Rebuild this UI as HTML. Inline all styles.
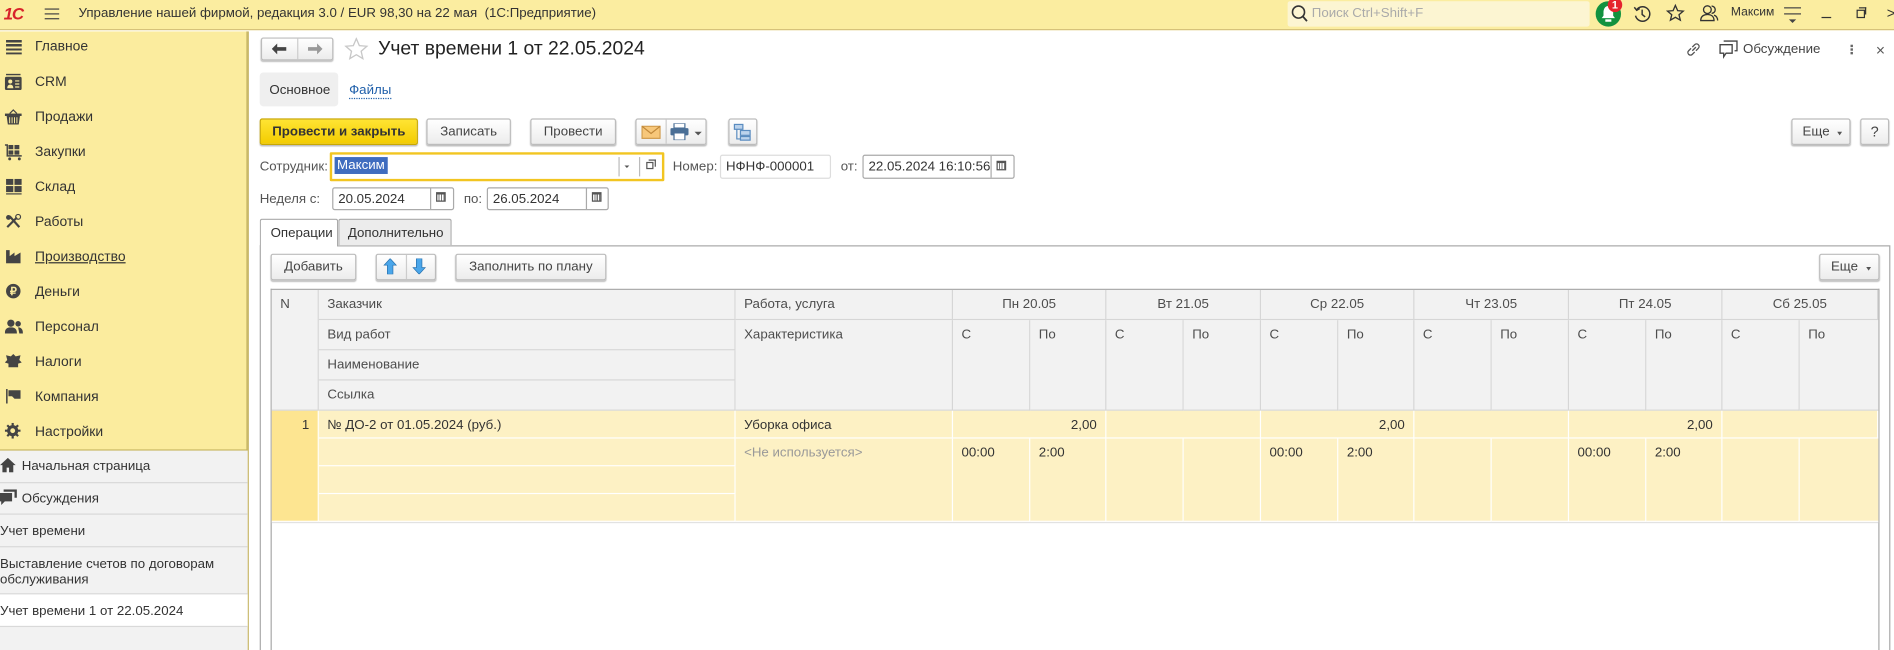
<!DOCTYPE html>
<html><head><meta charset="utf-8">
<style>
html,body{margin:0;padding:0;width:1894px;height:650px;overflow:hidden;background:#fff}
#w{position:absolute;left:0;top:0;width:1568px;height:538px;overflow:hidden;transform:scale(1.20791,1.2082);transform-origin:0 0;font-family:"Liberation Sans",sans-serif;font-size:11.5px;color:#333}
.a{position:absolute;box-sizing:border-box}
.btn{position:absolute;box-sizing:border-box;border:1px solid #bcbcbc;border-radius:2px;background:linear-gradient(#fff,#ececec);box-shadow:0 1px 1px rgba(0,0,0,.25);text-align:center;color:#444;font-size:11px;line-height:21px}
.side{position:absolute;left:29px;font-size:11.5px;color:#333;margin-top:1px}
.ic{position:absolute;left:5px;width:13px;height:12px}
.h{position:absolute;box-sizing:border-box;background:#f2f2f2;border-right:1px solid #d6d6d6;border-bottom:1px solid #d6d6d6;padding:6px 7px 0;color:#4d4d4d;font-size:11px;white-space:nowrap;overflow:hidden}
.d{position:absolute;box-sizing:border-box;background:#fdf1c4;border-right:1px solid #fff;border-bottom:1px solid #fff;padding:6px 7px 0;color:#333;font-size:11px;white-space:nowrap;overflow:hidden}
.inp{position:absolute;box-sizing:border-box;border:1px solid #c8c8c8;border-radius:2px;background:#fff;height:19px;padding:3px 4px 0;font-size:11px}
.g{position:absolute;left:0;width:205px;box-sizing:border-box;border-bottom:1px solid #d9d9d9;font-size:11px;color:#333;padding-left:0}
.lb{position:absolute;color:#555;font-size:11px}
</style></head><body><div id="w">

<!-- top bar -->
<div class="a" style="left:0;top:0;width:1568px;height:25px;background:#fbeda0;border-bottom:1px solid #d6c27a"></div>
<div class="a" style="left:3px;top:3px;font-weight:bold;font-size:14px;color:#d8232a;letter-spacing:-1px;font-style:italic">1С</div>
<div class="a" style="left:37px;top:7px;width:12px;height:1px;background:#444;box-shadow:0 4px 0 #444,0 8px 0 #444"></div>
<div class="a" style="left:65px;top:5px;font-size:11px;color:#333">Управление нашей фирмой, редакция 3.0 / EUR 98,30 на 22 мая&nbsp; (1С:Предприятие)</div>
<div class="a" style="left:1066px;top:1px;width:250px;height:21px;background:#fcf5d2;border-radius:2px"></div>
<svg class="a" style="left:1069px;top:4px" width="14" height="15"><circle cx="6" cy="6" r="5" fill="none" stroke="#333" stroke-width="1.3"/><path d="M9.5 9.5l3.5 4" stroke="#333" stroke-width="1.5"/></svg>
<div class="a" style="left:1086px;top:5px;color:#aaa;font-size:11px">Поиск Ctrl+Shift+F</div>
<div class="a" style="left:1321px;top:1px;width:21px;height:21px;border-radius:50%;background:#12923f"></div>
<svg class="a" style="left:1325px;top:4px" width="13" height="15"><path d="M6.5 1c-3 0-4 3-4 5v3l-1.5 2h11l-1.5-2v-3c0-2-1-5-4-5z" fill="#fff"/><rect x="4" y="12" width="5" height="2" fill="#fff"/></svg>
<div class="a" style="left:1331px;top:-2px;width:12px;height:12px;border-radius:50%;background:#e5232e;color:#fff;font-size:9px;font-weight:bold;text-align:center;line-height:12px">1</div>
<svg class="a" style="left:1352px;top:4px" width="15" height="15"><path d="M3 4A6 6 0 1 1 2 9" fill="none" stroke="#333" stroke-width="1.2"/><path d="M1 2l2 2.5 2.5-1.5" fill="none" stroke="#333" stroke-width="1.2"/><path d="M7.5 4v4l2.5 2" fill="none" stroke="#333" stroke-width="1.2"/></svg>
<svg class="a" style="left:1379px;top:3px" width="16" height="16"><path d="M8 1.5l1.9 4.3 4.6.4-3.5 3 1.1 4.5L8 11.3 3.9 13.7 5 9.2 1.5 6.2l4.6-.4z" fill="none" stroke="#333" stroke-width="1.1"/></svg>
<svg class="a" style="left:1407px;top:3px" width="16" height="16"><circle cx="6.5" cy="5" r="3.2" fill="none" stroke="#333" stroke-width="1.1"/><path d="M1 14c0-3.5 2.5-5 5.5-5s5.5 1.5 5.5 5z" fill="none" stroke="#333" stroke-width="1.1"/><path d="M10 2a3 3 0 0 1 0 6M12 9.5c2 .7 3 2 3 4.5" fill="none" stroke="#333" stroke-width="1.1"/></svg>
<div class="a" style="left:1433px;top:5px;font-size:10px;color:#333">Максим</div>
<div class="a" style="left:1477px;top:6px;width:14px;height:1px;background:#444;box-shadow:0 5px 0 #444"></div>
<div class="a" style="left:1481px;top:16px;width:0;height:0;border-left:3px solid transparent;border-right:3px solid transparent;border-top:3px solid #444"></div>
<div class="a" style="left:1508px;top:14px;width:8px;height:1px;background:#333"></div>
<div class="a" style="left:1537px;top:8px;width:7px;height:7px;border:1px solid #333"></div>
<div class="a" style="left:1539px;top:6px;width:6px;height:6px;border-top:1px solid #333;border-right:1px solid #333"></div>
<div class="a" style="left:1562px;top:4px;font-size:12px;color:#333">&gt;</div>

<!-- sidebar -->
<div class="a" style="left:0;top:26px;width:205px;height:347px;background:#fbec9e;border-right:1px solid #c4b25e;border-bottom:1px solid #c4b25e"></div>
<div class="a" style="left:205px;top:26px;width:1px;height:512px;background:#c4b25e"></div>
<div class="a" style="left:0;top:373px;width:205px;height:165px;background:#f2f2f2"></div>

<div class="ic" style="top:33px;background:repeating-linear-gradient(#444 0 2px,transparent 2px 3.5px)"></div><div class="side" style="top:32px">Главное</div>
<svg class="a" style="left:4px;top:61px" width="14" height="14"><rect x="1" y="0" width="12" height="1.3" fill="#444"/><rect x="0" y="2.5" width="14" height="11" rx="1.5" fill="#444"/><circle cx="4.5" cy="6.5" r="1.7" fill="#fbec9e"/><path d="M2 12c0-2 1-3 2.5-3S7 10 7 12z" fill="#fbec9e"/><path d="M8.5 6h3.5M8.5 8.5h3.5M8.5 11h3.5" stroke="#fbec9e"/></svg><div class="side" style="top:61px">CRM</div>
<svg class="a" style="left:4px;top:90px" width="14" height="13"><path d="M4 4L7 1l3 3" fill="none" stroke="#444"/><rect x="0" y="4" width="14" height="2" fill="#444"/><path d="M1.5 6h11l-1 7h-9z" fill="#444"/><path d="M4 7v5M6 7v5M8 7v5M10 7v5" stroke="#fbec9e" stroke-width=".8"/></svg><div class="side" style="top:90px">Продажи</div>
<svg class="a" style="left:4px;top:119px" width="15" height="14"><path d="M0 1h2v9h12" fill="none" stroke="#444" stroke-width="1.2"/><rect x="3" y="1" width="4" height="3.5" fill="#444"/><rect x="8" y="1" width="4" height="3.5" fill="#444"/><rect x="3" y="5.5" width="4" height="3.5" fill="#444"/><rect x="8" y="5.5" width="4" height="3.5" fill="#444"/><circle cx="4" cy="12.5" r="1.2" fill="#444"/><circle cx="12" cy="12.5" r="1.2" fill="#444"/></svg><div class="side" style="top:119px">Закупки</div>
<svg class="a" style="left:5px;top:148px" width="13" height="13"><rect x="0" y="0" width="6" height="5" fill="#444"/><rect x="7" y="0" width="6" height="5" fill="#444"/><rect x="0" y="6" width="6" height="5" fill="#444"/><rect x="7" y="6" width="6" height="5" fill="#444"/><rect x="0" y="12" width="13" height="1" fill="#444"/></svg><div class="side" style="top:148px">Склад</div>
<svg class="a" style="left:4px;top:177px" width="14" height="13"><path d="M2 11l8-8M4 2l8 9" stroke="#444" stroke-width="1.8"/><circle cx="11" cy="2.5" r="2" fill="none" stroke="#444"/><circle cx="3" cy="3" r="2" fill="#444"/></svg><div class="side" style="top:177px">Работы</div>
<svg class="a" style="left:5px;top:206px" width="13" height="12"><path d="M0 12V1h3v5l4-3v3l5-3v9z" fill="#444"/></svg><div class="side" style="top:206px;text-decoration:underline">Производство</div>
<div class="a" style="left:5px;top:235px;width:12px;height:12px;border-radius:50%;background:#444;color:#fbec9e;font-size:9px;font-weight:bold;text-align:center;line-height:12px">₽</div><div class="side" style="top:235px">Деньги</div>
<svg class="a" style="left:4px;top:264px" width="15" height="12"><circle cx="5" cy="3.5" r="3" fill="#444"/><path d="M0 12c0-4 2-5 5-5s5 1 5 5z" fill="#444"/><circle cx="11" cy="4" r="2.3" fill="#444"/><path d="M11 7c2 0 4 1 4 5h-3z" fill="#444"/></svg><div class="side" style="top:264px">Персонал</div>
<svg class="a" style="left:4px;top:293px" width="14" height="12"><path d="M7 0l2 2 4-1-1 4 2 2-3 1v3H3V8L0 7l2-2-1-4 4 1z" fill="#444"/></svg><div class="side" style="top:293px">Налоги</div>
<svg class="a" style="left:5px;top:322px" width="13" height="12"><path d="M0 0h1.3v12H0z M2 1h10v7H7L5 6H2z" fill="#444"/></svg><div class="side" style="top:322px">Компания</div>
<svg class="a" style="left:4px;top:350px" width="13" height="13"><circle cx="6.5" cy="6.5" r="3.5" fill="none" stroke="#444" stroke-width="2.2"/><path d="M6.5 0v13M0 6.5h13M2 2l9 9M11 2l-9 9" stroke="#444" stroke-width="1.8"/><circle cx="6.5" cy="6.5" r="2" fill="#fbec9e"/></svg><div class="side" style="top:351px">Настройки</div>

<div class="g" style="top:373px;height:27px"></div>
<svg class="a" style="left:0;top:379px" width="13" height="12"><path d="M6.5 0L0 6h2v6h3.5V8h2v4H11V6h2z" fill="#444"/></svg>
<div class="a" style="left:18px;top:380px;font-size:11px">Начальная страница</div>
<div class="g" style="top:400px;height:26px"></div>
<svg class="a" style="left:0;top:405px" width="14" height="13"><path d="M3 0h11v7h-2V2H3z M0 3h10v7H4l-3 3V10H0z" fill="#444"/></svg>
<div class="a" style="left:18px;top:407px;font-size:11px">Обсуждения</div>
<div class="g" style="top:426px;height:27px"></div>
<div class="a" style="left:0;top:434px;font-size:11px">Учет времени</div>
<div class="g" style="top:453px;height:39px"></div>
<div class="a" style="left:0;top:461px;font-size:11px;line-height:13px">Выставление счетов по договорам<br>обслуживания</div>
<div class="g" style="top:492px;height:27px;background:#fff"></div>
<div class="a" style="left:0;top:500px;font-size:11px">Учет времени 1 от 22.05.2024</div>

<!-- header of form -->
<div class="btn" style="left:216px;top:31px;width:60px;height:19px"></div>
<div class="a" style="left:246px;top:32px;width:1px;height:17px;background:#ccc"></div>
<svg class="a" style="left:225px;top:36px" width="13" height="9"><path d="M0 4.5L4.5 0v3H12v3H4.5v3z" fill="#444"/></svg>
<svg class="a" style="left:254px;top:36px" width="13" height="9"><path d="M13 4.5L8.5 0v3H1v3h7.5v3z" fill="#999"/></svg>
<svg class="a" style="left:285px;top:31px" width="20" height="19"><path d="M10 1l2.5 5.8 6.2.5-4.7 4.1 1.4 6.1L10 14.3 4.6 17.5 6 11.4 1.3 7.3l6.2-.5z" fill="none" stroke="#c8c8c8" stroke-width="1.1"/></svg>
<div class="a" style="left:313px;top:32px;font-size:16px;color:#222">Учет времени 1 от 22.05.2024</div>

<svg class="a" style="left:1395px;top:34px" width="14" height="14"><path d="M6 8l3-3M5 6L3 8a2.1 2.1 0 0 0 3 3l2-2M9 8l2-2a2.1 2.1 0 0 0-3-3L6 5" fill="none" stroke="#555" stroke-width="1.1"/></svg>
<svg class="a" style="left:1423px;top:33px" width="16" height="16"><path d="M4 1h11v8h-2 M1 4h10v7H6l-2 3v-3H1z" fill="none" stroke="#444" stroke-width="1.1"/></svg>
<div class="a" style="left:1443px;top:35px;font-size:11px;color:#444">Обсуждение</div>
<div class="a" style="left:1532px;top:37px;width:2px;height:2px;background:#666;box-shadow:0 3px 0 #666,0 6px 0 #666"></div>
<div class="a" style="left:1553px;top:34px;font-size:13px;color:#555">×</div>

<div class="a" style="left:215px;top:60px;width:65px;height:28px;background:#efefef;border-radius:3px"></div>
<div class="a" style="left:223px;top:69px;font-size:11px">Основное</div>
<div class="a" style="left:289px;top:69px;font-size:11px;color:#1f5faa;border-bottom:1px dotted #1f5faa;line-height:12px">Файлы</div>

<!-- buttons row -->
<div class="btn" style="left:215px;top:98px;width:131px;height:22px;background:linear-gradient(#ffe433,#f3cc00);border-color:#c9a800;font-weight:bold;color:#333">Провести и закрыть</div>
<div class="btn" style="left:353px;top:98px;width:70px;height:22px">Записать</div>
<div class="btn" style="left:439px;top:98px;width:71px;height:22px">Провести</div>
<div class="btn" style="left:526px;top:98px;width:59px;height:22px"></div>
<div class="a" style="left:551px;top:99px;width:1px;height:20px;background:#ccc"></div>
<svg class="a" style="left:531px;top:104px" width="16" height="11"><rect x=".5" y=".5" width="15" height="10" fill="#f7c77a" stroke="#d09a4a"/><path d="M.5.5l7.5 6 7.5-6" fill="none" stroke="#c0883a"/></svg>
<svg class="a" style="left:555px;top:102px" width="15" height="14"><rect x="3" y="0" width="9" height="4" fill="#fff" stroke="#4a6f96"/><rect x="0" y="4" width="15" height="6" rx="1" fill="#4a6f96"/><rect x="3" y="8" width="9" height="6" fill="#fff" stroke="#4a6f96"/></svg>
<div class="a" style="left:575px;top:109px;border-left:3px solid transparent;border-right:3px solid transparent;border-top:3px solid #555"></div>
<div class="btn" style="left:603px;top:98px;width:24px;height:22px"></div>
<svg class="a" style="left:607px;top:102px" width="16" height="15"><rect x="1" y="1" width="7" height="4" fill="#bcd3ec" stroke="#5a8cc0"/><rect x="6" y="6" width="8" height="4" fill="#bcd3ec" stroke="#5a8cc0"/><rect x="6" y="11" width="8" height="3" fill="#bcd3ec" stroke="#5a8cc0"/><path d="M3 5v8h3" fill="none" stroke="#5a8cc0"/></svg>
<div class="btn" style="left:1483px;top:98px;width:49px;height:22px;padding-right:8px">Еще</div>
<div class="a" style="left:1521px;top:109px;border-left:2.5px solid transparent;border-right:2.5px solid transparent;border-top:3px solid #555"></div>
<div class="btn" style="left:1540px;top:98px;width:24px;height:22px;font-size:12px">?</div>

<!-- fields -->
<div class="lb" style="left:215px;top:132px">Сотрудник:</div>
<div class="a" style="left:273px;top:126px;width:277px;height:24px;border:2px solid #f2c521;border-radius:1px;background:#fff"></div>
<div class="a" style="left:277px;top:130px;background:#3f6cbf;color:#fff;padding:1px 2px;font-size:11px">Максим</div>
<div class="a" style="left:512px;top:130px;width:1px;height:16px;background:#bbb"></div>
<div class="a" style="left:529px;top:130px;width:1px;height:16px;background:#bbb"></div>
<div class="a" style="left:517px;top:137px;border-left:2.5px solid transparent;border-right:2.5px solid transparent;border-top:2.5px solid #555"></div>
<div class="a" style="left:535px;top:134px;width:6px;height:6px;border:1px solid #555"></div>
<div class="a" style="left:537px;top:132px;width:6px;height:6px;border-top:1px solid #555;border-right:1px solid #555"></div>
<div class="lb" style="left:557px;top:132px">Номер:</div>
<div class="inp" style="left:596px;top:128px;width:92px;height:20px;border-color:#ddd">НФНФ-000001</div>
<div class="lb" style="left:696px;top:132px">от:</div>
<div class="inp" style="left:714px;top:128px;width:126px;height:20px;border-color:#aaa">22.05.2024 16:10:56</div>
<div class="a" style="left:820px;top:129px;width:1px;height:18px;background:#aaa"></div>
<div class="a" style="left:825px;top:133px;width:8px;height:8px;border:1px solid #555;border-top-width:2px;background:repeating-linear-gradient(90deg,#fff 0 1px,#777 1px 2px)"></div>

<div class="lb" style="left:215px;top:159px">Неделя с:</div>
<div class="inp" style="left:275px;top:155px;width:101px;height:19px;border-color:#aaa">20.05.2024</div>
<div class="a" style="left:356px;top:156px;width:1px;height:17px;background:#aaa"></div>
<div class="a" style="left:361px;top:159px;width:8px;height:8px;border:1px solid #555;border-top-width:2px;background:repeating-linear-gradient(90deg,#fff 0 1px,#777 1px 2px)"></div>
<div class="lb" style="left:384px;top:159px">по:</div>
<div class="inp" style="left:403px;top:155px;width:101px;height:19px;border-color:#aaa">26.05.2024</div>
<div class="a" style="left:485px;top:156px;width:1px;height:17px;background:#aaa"></div>
<div class="a" style="left:490px;top:159px;width:8px;height:8px;border:1px solid #555;border-top-width:2px;background:repeating-linear-gradient(90deg,#fff 0 1px,#777 1px 2px)"></div>

<!-- tabs -->
<div class="a" style="left:215px;top:203px;width:1350px;height:345px;border:1px solid #aaa;background:#fff"></div>
<div class="a" style="left:215px;top:181px;width:65px;height:23px;border:1px solid #aaa;border-bottom:none;background:#fff;border-radius:2px 2px 0 0;padding:5px 0 0 8px;font-size:11px">Операции</div>
<div class="a" style="left:280px;top:181px;width:94px;height:22px;border:1px solid #aaa;border-bottom:none;background:#ececec;border-radius:2px 2px 0 0;padding:5px 0 0 7px;font-size:11px">Дополнительно</div>

<div class="btn" style="left:224px;top:210px;width:71px;height:22px">Добавить</div>
<div class="btn" style="left:311px;top:210px;width:50px;height:22px"></div>
<div class="a" style="left:336px;top:211px;width:1px;height:20px;background:#ccc"></div>
<svg class="a" style="left:317px;top:214px" width="12" height="13"><path d="M6 0l5 5.5H8.3V13H3.7V5.5H1z" fill="#4aa6ea" stroke="#2a73b0" stroke-width=".6"/></svg>
<svg class="a" style="left:341px;top:214px" width="12" height="13"><path d="M6 13l5-5.5H8.3V0H3.7v7.5H1z" fill="#4aa6ea" stroke="#2a73b0" stroke-width=".6"/></svg>
<div class="btn" style="left:377px;top:210px;width:125px;height:22px">Заполнить по плану</div>
<div class="btn" style="left:1506px;top:210px;width:50px;height:22px;padding-right:8px">Еще</div>
<div class="a" style="left:1545px;top:221px;border-left:2.5px solid transparent;border-right:2.5px solid transparent;border-top:3px solid #555"></div>

<!-- table -->
<div class="a" style="left:224px;top:239px;width:1332px;height:310px;border:1px solid #a8a8a8;border-bottom:none"></div>
<div class="h" style="left:225px;top:240px;width:39px;height:100px">N</div>
<div class="h" style="left:264px;top:240px;width:345px;height:25px">Заказчик</div>
<div class="h" style="left:264px;top:265px;width:345px;height:25px">Вид работ</div>
<div class="h" style="left:264px;top:290px;width:345px;height:25px">Наименование</div>
<div class="h" style="left:264px;top:315px;width:345px;height:25px">Ссылка</div>
<div class="h" style="left:609px;top:240px;width:180px;height:25px">Работа, услуга</div>
<div class="h" style="left:609px;top:265px;width:180px;height:75px">Характеристика</div>

<div class="h" style="left:789px;top:240px;width:127px;height:25px;text-align:center">Пн 20.05</div>
<div class="h" style="left:916px;top:240px;width:128px;height:25px;text-align:center">Вт 21.05</div>
<div class="h" style="left:1044px;top:240px;width:127px;height:25px;text-align:center">Ср 22.05</div>
<div class="h" style="left:1171px;top:240px;width:128px;height:25px;text-align:center">Чт 23.05</div>
<div class="h" style="left:1299px;top:240px;width:127px;height:25px;text-align:center">Пт 24.05</div>
<div class="h" style="left:1426px;top:240px;width:129px;height:25px;text-align:center">Сб 25.05</div>

<div class="h" style="left:789px;top:265px;width:64px;height:75px">С</div><div class="h" style="left:853px;top:265px;width:63px;height:75px">По</div>
<div class="h" style="left:916px;top:265px;width:64px;height:75px">С</div><div class="h" style="left:980px;top:265px;width:64px;height:75px">По</div>
<div class="h" style="left:1044px;top:265px;width:64px;height:75px">С</div><div class="h" style="left:1108px;top:265px;width:63px;height:75px">По</div>
<div class="h" style="left:1171px;top:265px;width:64px;height:75px">С</div><div class="h" style="left:1235px;top:265px;width:64px;height:75px">По</div>
<div class="h" style="left:1299px;top:265px;width:64px;height:75px">С</div><div class="h" style="left:1363px;top:265px;width:63px;height:75px">По</div>
<div class="h" style="left:1426px;top:265px;width:64px;height:75px">С</div><div class="h" style="left:1490px;top:265px;width:65px;height:75px;border-right:none">По</div>

<div class="d" style="left:225px;top:340px;width:39px;height:92px;background:#fde591;text-align:right">1</div>
<div class="d" style="left:264px;top:340px;width:345px;height:23px">№ ДО-2 от 01.05.2024 (руб.)</div>
<div class="d" style="left:264px;top:363px;width:345px;height:23px"></div>
<div class="d" style="left:264px;top:386px;width:345px;height:23px"></div>
<div class="d" style="left:264px;top:409px;width:345px;height:23px"></div>
<div class="d" style="left:609px;top:340px;width:180px;height:23px">Уборка офиса</div>
<div class="d" style="left:609px;top:363px;width:180px;height:69px;color:#999">&lt;Не используется&gt;</div>

<div class="d" style="left:789px;top:340px;width:127px;height:23px;text-align:right">2,00</div>
<div class="d" style="left:916px;top:340px;width:128px;height:23px"></div>
<div class="d" style="left:1044px;top:340px;width:127px;height:23px;text-align:right">2,00</div>
<div class="d" style="left:1171px;top:340px;width:128px;height:23px"></div>
<div class="d" style="left:1299px;top:340px;width:127px;height:23px;text-align:right">2,00</div>
<div class="d" style="left:1426px;top:340px;width:129px;height:23px"></div>

<div class="d" style="left:789px;top:363px;width:64px;height:69px">00:00</div><div class="d" style="left:853px;top:363px;width:63px;height:69px">2:00</div>
<div class="d" style="left:916px;top:363px;width:64px;height:69px"></div><div class="d" style="left:980px;top:363px;width:64px;height:69px"></div>
<div class="d" style="left:1044px;top:363px;width:64px;height:69px">00:00</div><div class="d" style="left:1108px;top:363px;width:63px;height:69px">2:00</div>
<div class="d" style="left:1171px;top:363px;width:64px;height:69px"></div><div class="d" style="left:1235px;top:363px;width:64px;height:69px"></div>
<div class="d" style="left:1299px;top:363px;width:64px;height:69px">00:00</div><div class="d" style="left:1363px;top:363px;width:63px;height:69px">2:00</div>
<div class="d" style="left:1426px;top:363px;width:64px;height:69px"></div><div class="d" style="left:1490px;top:363px;width:65px;height:69px;border-right:none"></div>
<div class="a" style="left:225px;top:432px;width:1330px;height:1px;background:#e2e2e2"></div>

</div></body></html>
